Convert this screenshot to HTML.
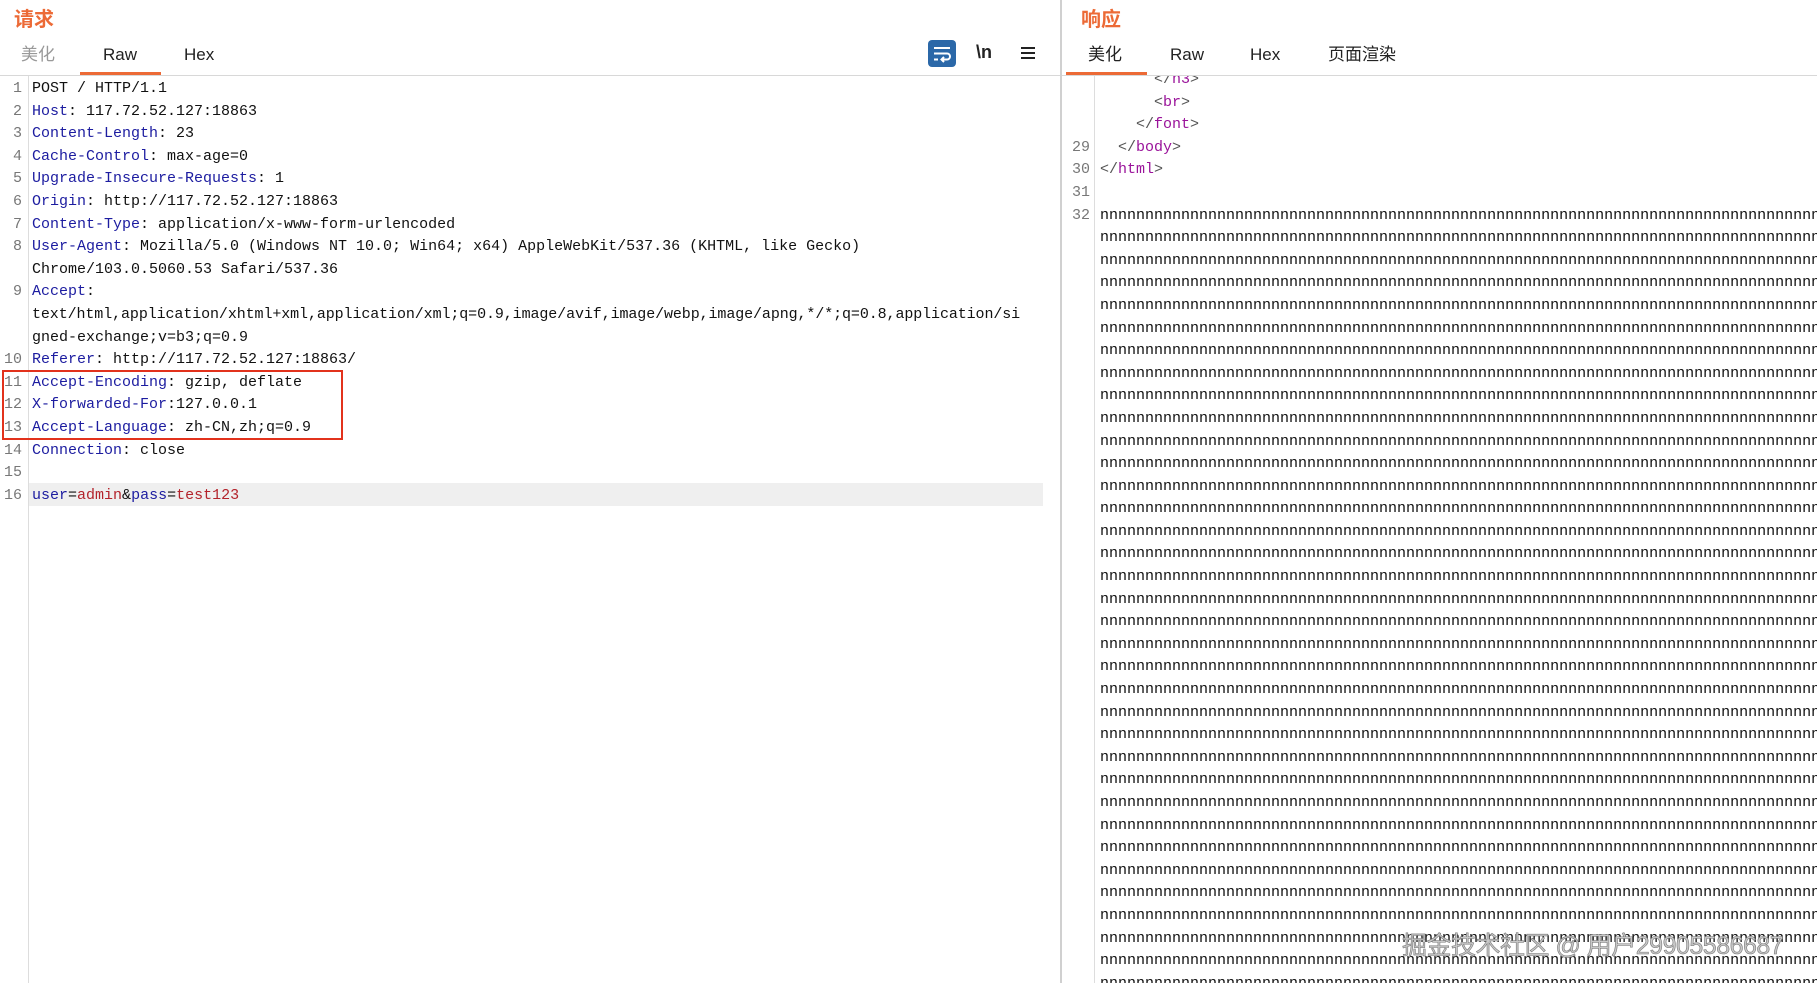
<!DOCTYPE html>
<html><head><meta charset="utf-8">
<style>
*{margin:0;padding:0;box-sizing:border-box}
html,body{width:1817px;height:983px;overflow:hidden;background:#fff;font-family:"Liberation Sans","Noto Sans CJK SC",sans-serif}
.abs{position:absolute}
.title{color:#ec6a36;font-weight:bold;font-size:20px;top:5px;line-height:30px}
.tab{font-size:17px;color:#222;top:44px;line-height:22px;height:22px}
.code{font-family:"Liberation Mono","Noto Sans CJK SC",monospace;font-size:15px;white-space:pre;line-height:22.6px;height:22.6px;color:#111}
.ln{position:absolute;text-align:right;color:#777;width:22px;left:0}
.k{color:#1c1ca0}
.r{color:#b3232b}
.t{color:#9a139a}
.b{color:#555}
</style></head><body>
<div class="abs title" style="left:14px">请求</div>
<div class="abs tab" style="left:21px;color:#999">美化</div>
<div class="abs tab" style="left:103px;font-weight:500">Raw</div>
<div class="abs tab" style="left:184px">Hex</div>
<div class="abs" style="left:80px;top:72px;width:81px;height:3px;background:#ec6a36"></div>
<div class="abs" style="left:0;top:75px;width:1061px;height:1px;background:#d8d8d8"></div>
<div class="abs" style="left:928px;top:40px;width:28px;height:27px;background:#2b68a8;border-radius:4px">
<svg width="28" height="27" viewBox="0 0 28 27"><path d="M6 8h16M6 13.5h13a3 3 0 0 1 0 6h-5M16 17l-2.5 2.5L16 22M6 19.5h4" stroke="#fff" stroke-width="2" fill="none"/></svg></div>
<div class="abs" style="left:976px;top:42px;font-size:18px;font-weight:bold;color:#222">\n</div>
<svg class="abs" style="left:1020px;top:46px" width="16" height="14"><path d="M1 2h14M1 7h14M1 12h14" stroke="#222" stroke-width="2"/></svg>
<div class="abs" style="left:1060px;top:0;width:2px;height:983px;background:#d0d0d0"></div>
<div class="abs" style="left:28px;top:76px;width:1px;height:907px;background:#ddd"></div>
<div class="abs" style="left:29px;top:483px;width:1014px;height:23px;background:#efefef"></div>
<div class="abs" style="left:0;top:78px;width:1058px">
<div class="code"><span class="ln">1</span><span style="margin-left:32px">POST / HTTP/1.1</span></div>
<div class="code"><span class="ln">2</span><span style="margin-left:32px"><span class="k">Host</span>: 117.72.52.127:18863</span></div>
<div class="code"><span class="ln">3</span><span style="margin-left:32px"><span class="k">Content-Length</span>: 23</span></div>
<div class="code"><span class="ln">4</span><span style="margin-left:32px"><span class="k">Cache-Control</span>: max-age=0</span></div>
<div class="code"><span class="ln">5</span><span style="margin-left:32px"><span class="k">Upgrade-Insecure-Requests</span>: 1</span></div>
<div class="code"><span class="ln">6</span><span style="margin-left:32px"><span class="k">Origin</span>: http://117.72.52.127:18863</span></div>
<div class="code"><span class="ln">7</span><span style="margin-left:32px"><span class="k">Content-Type</span>: application/x-www-form-urlencoded</span></div>
<div class="code"><span class="ln">8</span><span style="margin-left:32px"><span class="k">User-Agent</span>: Mozilla/5.0 (Windows NT 10.0; Win64; x64) AppleWebKit/537.36 (KHTML, like Gecko)</span></div>
<div class="code"><span style="margin-left:32px">Chrome/103.0.5060.53 Safari/537.36</span></div>
<div class="code"><span class="ln">9</span><span style="margin-left:32px"><span class="k">Accept</span>:</span></div>
<div class="code" style="letter-spacing:-0.1px"><span style="margin-left:32px">text/html,application/xhtml+xml,application/xml;q=0.9,image/avif,image/webp,image/apng,*/*;q=0.8,application/si</span></div>
<div class="code"><span style="margin-left:32px">gned-exchange;v=b3;q=0.9</span></div>
<div class="code"><span class="ln">10</span><span style="margin-left:32px"><span class="k">Referer</span>: http://117.72.52.127:18863/</span></div>
<div class="code"><span class="ln">11</span><span style="margin-left:32px"><span class="k">Accept-Encoding</span>: gzip, deflate</span></div>
<div class="code"><span class="ln">12</span><span style="margin-left:32px"><span class="k">X-forwarded-For</span>:127.0.0.1</span></div>
<div class="code"><span class="ln">13</span><span style="margin-left:32px"><span class="k">Accept-Language</span>: zh-CN,zh;q=0.9</span></div>
<div class="code"><span class="ln">14</span><span style="margin-left:32px"><span class="k">Connection</span>: close</span></div>
<div class="code"><span class="ln">15</span></div>
<div class="code"><span class="ln">16</span><span style="margin-left:32px"><span class="k">user</span>=<span class="r">admin</span>&amp;<span class="k">pass</span>=<span class="r">test123</span></span></div>
</div>
<div class="abs" style="left:2px;top:370px;width:341px;height:70px;border:2px solid #e2321c"></div>
<div class="abs title" style="left:1081px">响应</div>
<div class="abs tab" style="left:1088px">美化</div>
<div class="abs tab" style="left:1170px">Raw</div>
<div class="abs tab" style="left:1250px">Hex</div>
<div class="abs tab" style="left:1328px">页面渲染</div>
<div class="abs" style="left:1066px;top:72px;width:81px;height:3px;background:#ec6a36"></div>
<div class="abs" style="left:1062px;top:75px;width:755px;height:1px;background:#d8d8d8"></div>
<div class="abs" style="left:1094px;top:76px;width:1px;height:907px;background:#ddd"></div>
<div class="abs" style="left:1062px;top:76px;width:755px;height:907px;overflow:hidden">
<div style="position:absolute;left:0;top:-7px;width:755px">
<div class="code"><span style="margin-left:92px"><span class="b">&lt;/</span><span class="t">h3</span><span class="b">&gt;</span></span></div>
<div class="code"><span style="margin-left:92px"><span class="b">&lt;</span><span class="t">br</span><span class="b">&gt;</span></span></div>
<div class="code"><span style="margin-left:74px"><span class="b">&lt;/</span><span class="t">font</span><span class="b">&gt;</span></span></div>
<div class="code"><span class="ln" style="width:28px">29</span><span style="margin-left:56px"><span class="b">&lt;/</span><span class="t">body</span><span class="b">&gt;</span></span></div>
<div class="code"><span class="ln" style="width:28px">30</span><span style="margin-left:38px"><span class="b">&lt;/</span><span class="t">html</span><span class="b">&gt;</span></span></div>
<div class="code"><span class="ln" style="width:28px">31</span></div>
<div class="code"><span class="ln" style="width:28px">32</span><span style="margin-left:38px">nnnnnnnnnnnnnnnnnnnnnnnnnnnnnnnnnnnnnnnnnnnnnnnnnnnnnnnnnnnnnnnnnnnnnnnnnnnnnnnnnnnnnnnnnn</span></div>
<div id="nn"></div>
</div></div>
<script>
var s='';for(var i=0;i<34;i++)s+='<div class="code"><span style="margin-left:38px">nnnnnnnnnnnnnnnnnnnnnnnnnnnnnnnnnnnnnnnnnnnnnnnnnnnnnnnnnnnnnnnnnnnnnnnnnnnnnnnnnnnnnnnnnn</span></div>';document.getElementById('nn').innerHTML=s;
</script>
<div class="abs" style="left:1402px;top:926px;font-size:25px;color:#c8c8c8;-webkit-text-stroke:0.6px #777;letter-spacing:-0.5px;white-space:nowrap">掘金技术社区 @ 用户29905586687</div>
</body></html>
